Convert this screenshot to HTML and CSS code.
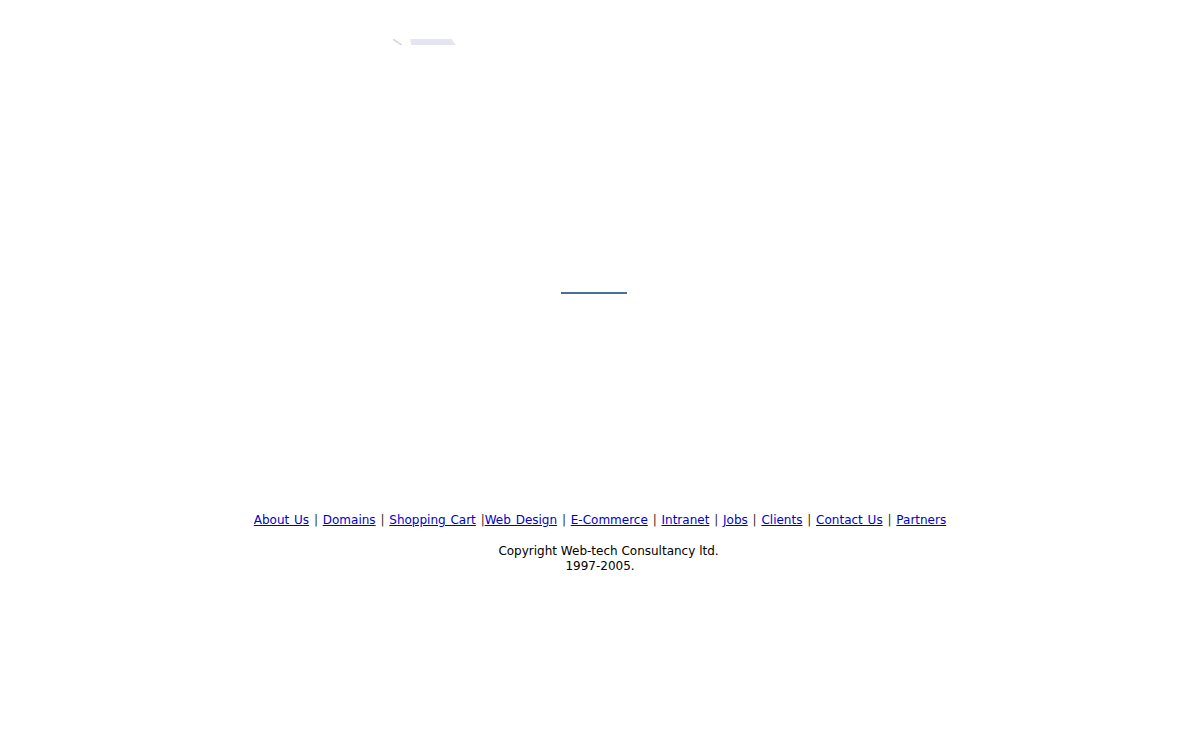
FILE: index.html
```html
<!DOCTYPE html>
<html>
<head>
<meta charset="utf-8">
<title>Web-tech Consultancy</title>
<link rel="stylesheet" href="styles.css">
</head>
<body>
<div class="page">
  <div class="top">
    <span class="tick"></span>
    <span class="tab"></span>
  </div>
  <div class="mid">
    <span class="rule"></span>
  </div>
  <div class="footer">
    <p class="links"><a href="#">About Us</a> | <a href="#">Domains</a> | <a href="#">Shopping Cart</a> |<a href="#">Web Design</a> | <a href="#">E-Commerce</a> | <a href="#">Intranet</a> | <a href="#">Jobs</a> | <a href="#">Clients</a> | <a href="#">Contact Us</a> | <a href="#">Partners</a></p>
    <p class="copy"><span class="copy-first">Copyright Web-tech Consultancy ltd.</span><br>1997-2005.</p>
  </div>
</div>
</body>
</html>
```
FILE: styles.css
```css
html, body {
  margin: 0;
  padding: 0;
  background: #ffffff;
}
.page {
  width: 1200px;
  font-family: "DejaVu Sans", Verdana, sans-serif;
  font-size: 12px;
  color: #000;
}
.top {
  display: flex;
  height: 45px;
  box-sizing: border-box;
  padding-top: 39px;
  padding-left: 393px;
  align-items: stretch;
}
.tick {
  width: 9px;
  height: 6px;
  background: linear-gradient(to bottom left, transparent 42%, #d8d8d8 45%, #d8d8d8 58%, transparent 62%);
}
.tab {
  margin-left: 8px;
  width: 46px;
  height: 6px;
  background: #e4e4f4;
  clip-path: polygon(0 0, 90% 0, 100% 100%, 3% 100%);
}
.mid {
  height: 249px;
  display: flex;
  align-items: flex-end;
  padding-left: 561px;
}
.rule {
  width: 66px;
  height: 2px;
  background: #4a6e96;
}
.footer {
  padding-top: 219px;
  text-align: center;
}
.links {
  margin: 0;
  line-height: 15px;
  word-spacing: 1px;
  color: #332e1a;
}
.links a {
  color: #0000cc;
  word-spacing: 1px;
}
.copy {
  margin: 16px 0 0;
  line-height: 15px;
}
.copy-first {
  padding-left: 17px;
}
```
